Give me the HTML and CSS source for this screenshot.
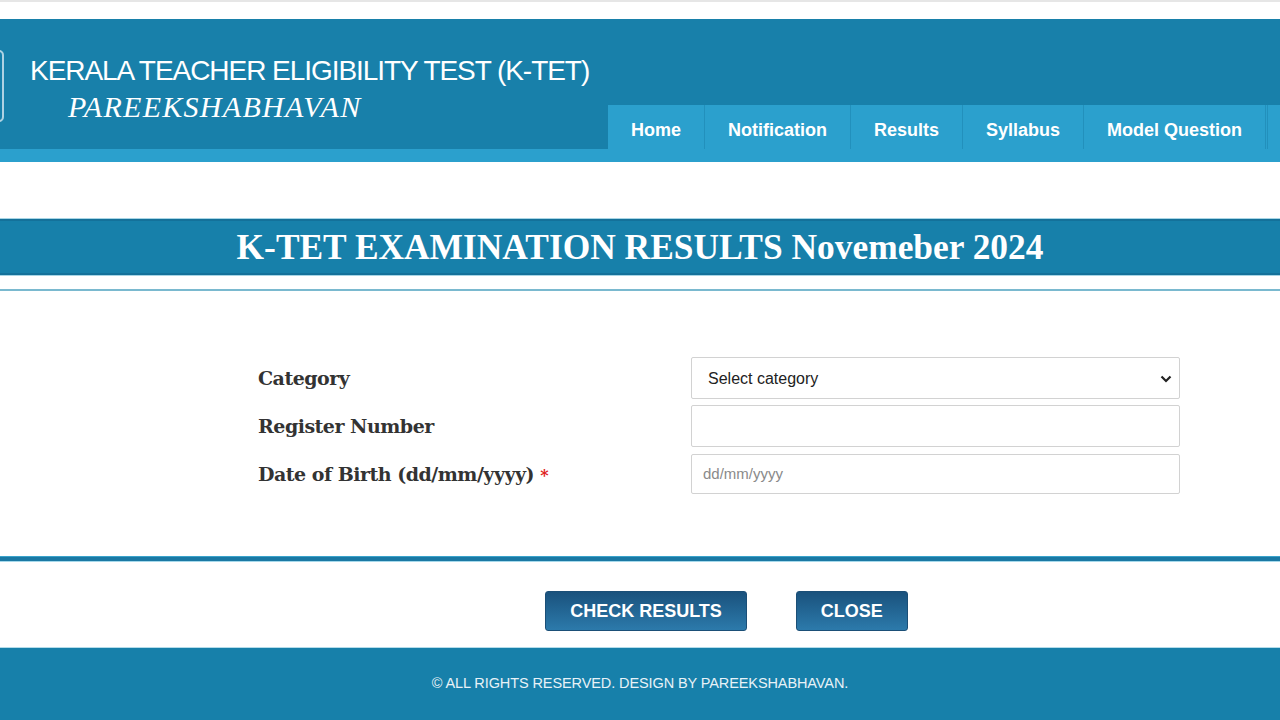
FILE: index.html
```html
<!DOCTYPE html>
<html lang="en">
<head>
<meta charset="UTF-8">
<meta name="viewport" content="width=device-width, initial-scale=1.0">
<title>K-TET Results</title>
<link rel="stylesheet" href="styles.css">
</head>
<body>
    <div class="topline"></div>

    <header class="site-header">
        <div class="brand">
            <div class="logo"></div>
            <div class="brand-text">
                <div class="brand-title">KERALA TEACHER ELIGIBILITY TEST (K-TET)</div>
                <div class="brand-sub">PAREEKSHABHAVAN</div>
            </div>
        </div>
        <nav class="nav">
            <a href="#">Home</a>
            <a href="#">Notification</a>
            <a href="#">Results</a>
            <a href="#">Syllabus</a>
            <a href="#">Model Question</a>
            <a href="#" class="more"></a>
        </nav>
    </header>

    <h1 class="page-title">K-TET EXAMINATION RESULTS Novemeber 2024</h1>
    <div class="thin-rule"></div>

    <form class="result-form" id="resultForm">
        <label for="category">Category</label>
        <div class="select-wrap">
            <select id="category" name="category">
                <option value="">Select category</option>
                <option value="1">Category I</option>
                <option value="2">Category II</option>
                <option value="3">Category III</option>
                <option value="4">Category IV</option>
            </select>
            <svg class="chevron" width="12" height="8" viewBox="0 0 12 8">
                <path d="M1.5 1.5 L6 6 L10.5 1.5" fill="none" stroke="#222" stroke-width="2.2"/>
            </svg>
        </div>

        <label for="regno">Register Number</label>
        <input type="text" id="regno" name="regno">

        <label for="dob">Date of Birth (dd/mm/yyyy) <span class="req">*</span></label>
        <input type="text" id="dob" name="dob" placeholder="dd/mm/yyyy" class="dob">
    </form>

    <div class="thick-rule"></div>

    <div class="actions">
        <button type="submit" form="resultForm">CHECK RESULTS</button>
        <button type="button">CLOSE</button>
    </div>

    <footer class="site-footer">
        &copy; ALL RIGHTS RESERVED. DESIGN BY PAREEKSHABHAVAN.
    </footer>
</body>
</html>
```

FILE: styles.css
```css
body {
    margin: 0;
    font-family: "Liberation Sans", Arial, sans-serif;
    background-color: #fff;
    overflow: hidden;
}
.topline {
    height: 2px;
    background-color: #e6e6e6;
}

/* header */
.site-header {
    display: flex;
    align-items: flex-end;
    margin-top: 17px;
    height: 130px;
    background-color: #1880aa;
    border-bottom: 13px solid #2ba0cd;
    overflow: hidden;
}
.brand {
    flex: 0 0 608px;
    align-self: flex-start;
    display: flex;
}
.logo {
    width: 60px;
    height: 72px;
    margin-left: -56px;
    margin-top: 31px;
    border: 2px solid rgba(225, 238, 246, 0.75);
    border-radius: 5px;
    box-sizing: border-box;
}
.brand-text {
    margin-left: 26px;
    padding-top: 36px;
    color: #fff;
}
.brand-title {
    font-size: 28px;
    line-height: 32px;
    letter-spacing: -1.05px;
    white-space: nowrap;
}
.brand-sub {
    margin-top: 3px;
    padding-left: 38px;
    font-family: "Liberation Serif", "Times New Roman", serif;
    font-style: italic;
    font-size: 30px;
    line-height: 34px;
    letter-spacing: 1.3px;
}
.nav {
    display: flex;
    flex: none;
    height: 44px;
    background-color: #2ba0cd;
}
.nav a {
    padding: 14px 23px 8px;
    line-height: 22px;
    font-size: 18px;
    font-weight: bold;
    color: #fff;
    text-decoration: none;
    white-space: nowrap;
    border-right: 1px solid #2290bc;
}
.nav a.more {
    width: 60px;
    border-left: 1px solid #2290bc;
    margin-left: 1px;
}

/* title */
.page-title {
    margin: 57px 0 0;
    height: 52px;
    line-height: 52px;
    background-color: #1780aa;
    border-top: 2px solid #14719a;
    border-bottom: 2px solid #14719a;
    box-shadow: 0 -1px 0 #a8d5e5, 0 1px 0 #a8d5e5;
    color: #fff;
    text-align: center;
    font-family: "Liberation Serif", "Times New Roman", serif;
    font-size: 35.4px;
    font-weight: bold;
}
.thin-rule {
    margin-top: 14px;
    height: 2px;
    background-color: #7ab9cf;
}

/* form */
.result-form {
    display: grid;
    grid-template-columns: 433px 489px;
    grid-auto-rows: 42px;
    row-gap: 6px;
    align-items: center;
    margin: 66px 0 0 258px;
}
.result-form label {
    font-family: "DejaVu Serif", Georgia, serif;
    font-weight: bold;
    font-size: 19px;
    letter-spacing: -0.5px;
    color: #333;
}
.req {
    color: #e02020;
    font-size: 16px;
}
.select-wrap {
    position: relative;
    height: 100%;
}
.select-wrap select,
.result-form input {
    width: 100%;
    height: 100%;
    box-sizing: border-box;
    border: 1px solid #d2d2d2;
    border-radius: 2px;
    background-color: #fff;
    font-family: "Liberation Sans", Arial, sans-serif;
    font-size: 16px;
    color: #222;
}
.select-wrap select {
    appearance: none;
    padding: 0 30px 0 16px;
}
.chevron {
    position: absolute;
    right: 8px;
    top: 18px;
    pointer-events: none;
}
.result-form input {
    padding: 0 11px;
}
.result-form input.dob {
    height: 40px;
}
.result-form input::placeholder {
    color: #8a8a8a;
    font-size: 15px;
}

.thick-rule {
    margin-top: 61px;
    height: 4px;
    background-color: #1b79a4;
    border-top: 1px solid #3aa3cb;
    border-bottom: 1px solid #a6d9eb;
}

/* buttons */
.actions {
    display: flex;
    justify-content: center;
    gap: 49px;
    margin-top: 29px;
    padding-left: 173px;
}
.actions button {
    height: 40px;
    padding: 0 24px;
    border: 1px solid #1b4f77;
    border-radius: 3px;
    background: linear-gradient(#1a527d, #2c7aab);
    color: #fff;
    font-family: "Liberation Sans", Arial, sans-serif;
    font-size: 18px;
    font-weight: bold;
    cursor: pointer;
}

/* footer */
.site-footer {
    margin-top: 16px;
    height: 72px;
    line-height: 70px;
    background-color: #1780aa;
    border-top: 1px solid #b4dcea;
    color: #e8f2f7;
    text-align: center;
    font-size: 14.5px;
    letter-spacing: -0.1px;
}
```
